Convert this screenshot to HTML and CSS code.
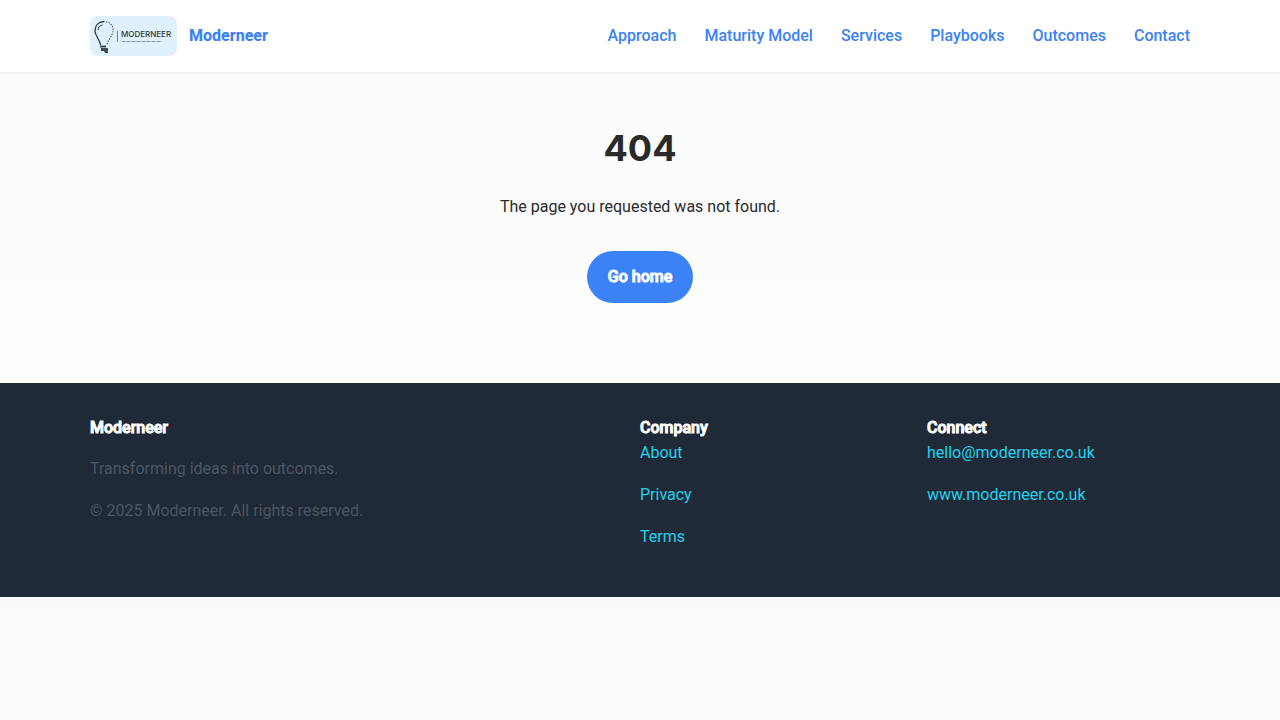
FILE: index.html
```html
<!DOCTYPE html>
<html lang="en">
<head>
<meta charset="utf-8">
<meta name="viewport" content="width=device-width, initial-scale=1">
<title>Page not found | Moderneer</title>
<link rel="stylesheet" href="styles.css">
</head>
<body>
<header class="site-header">
  <div class="container header-row">
    <a class="brand" href="#">
      <svg class="brand-logo" viewBox="0 0 87 40" aria-hidden="true">
        <rect width="87" height="40" fill="#def1fd"/>
        <g fill="none" stroke="#30363c">
          <path d="M14 5.500C8 6 4.800 10 5 15C5.200 20 9.500 23 10.500 29" stroke-width="1.300"/>
          <path d="M8 14C8 11.500 9.800 9.500 12.500 9" stroke-width="1"/>
          <path d="M14 5.500C20 5.500 23.500 10 23 15C22.500 20 17.500 24 17 29" stroke-width="1.200" stroke-linecap="round" stroke-dasharray="0.100 2.500"/>
          <path d="M27.500 15V26" stroke="#78838c" stroke-width="1"/>
          <path d="M32 25.500H72" stroke="#88939b" stroke-width="1" stroke-dasharray="3 0.500 1 0.500"/>
        </g>
        <path d="M10 29.500h6v2h-6zM11 32h7v3h-7zM14 35h4v2h-3z" fill="#454a4f"/>
        <text class="logo-word" x="31" y="21" fill="#30363c">MODERNEER</text>
      </svg>
      <span>Moderneer</span>
    </a>
    <nav class="main-nav" aria-label="Main">
      <a href="#">Approach</a>
      <a href="#">Maturity Model</a>
      <a href="#">Services</a>
      <a href="#">Playbooks</a>
      <a href="#">Outcomes</a>
      <a href="#">Contact</a>
    </nav>
  </div>
</header>
<main class="container not-found">
  <h1>404</h1>
  <p>The page you requested was not found.</p>
  <a class="button" href="#">Go home</a>
</main>
<footer class="site-footer">
  <div class="container footer-grid">
    <section>
      <h2>Moderneer</h2>
      <p>Transforming ideas into outcomes.</p>
      <p>© 2025 Moderneer. All rights reserved.</p>
    </section>
    <section>
      <h2>Company</h2>
      <ul>
        <li><a href="#">About</a></li>
        <li><a href="#">Privacy</a></li>
        <li><a href="#">Terms</a></li>
      </ul>
    </section>
    <section>
      <h2>Connect</h2>
      <ul>
        <li><a href="#">hello@moderneer.co.uk</a></li>
        <li><a href="#">www.moderneer.co.uk</a></li>
      </ul>
    </section>
  </div>
</footer>
</body>
</html>
```

FILE: styles.css
```css
* { box-sizing: border-box; }

body {
  margin: 0;
  background: linear-gradient(180deg, #f9fafb, #ffffff);
  color: #2a2a2a;
  font: 400 16px/26px Roboto, sans-serif;
}

a { text-decoration: none; }

.container {
  width: 100%;
  max-width: 1140px;
  margin: 0 auto;
  padding: 0 20px;
}

.site-header {
  background: #ffffff;
  border-bottom: 1px solid #f1f1f2;
  box-shadow: 0 1px 2px rgba(0, 0, 0, 0.03);
}

.header-row {
  display: flex;
  align-items: center;
  justify-content: space-between;
  padding-top: 16px;
  padding-bottom: 16px;
}

.brand {
  display: flex;
  align-items: center;
  gap: 12px;
  color: #3b82f6;
  font-weight: 800;
}

.brand-logo {
  width: 87px;
  height: 40px;
  border-radius: 8px;
}

.logo-word { font: 500 8px Inter, sans-serif; }

.main-nav {
  display: flex;
  flex-wrap: wrap;
  gap: 28px;
}

.main-nav a {
  color: #3b82f6;
  font-weight: 500;
}

.not-found {
  padding-top: 46px;
  padding-bottom: 80px;
  display: flex;
  flex-direction: column;
  align-items: center;
  text-align: center;
}

.not-found h1 {
  margin: 0 0 17px;
  font: 700 36px/58px Inter, sans-serif;
}

.not-found p { margin: 0 0 31px; }

.button {
  padding: 13px 21px;
  border-radius: 26px;
  background: #3b82f6;
  color: #ffffff;
  font-weight: 500;
  -webkit-text-stroke: 1px #ffffff;
}

.site-footer {
  padding: 32px 0 31px;
  background: #1f2937;
  color: #4b5563;
}

.footer-grid {
  display: grid;
  grid-template-columns: 2fr 1fr 1fr;
  gap: 24px;
}

.footer-grid h2 {
  margin: 0;
  color: #ffffff;
  font-size: 16px;
  line-height: 25px;
  font-weight: 500;
  -webkit-text-stroke: 1px #ffffff;
}

.footer-grid p { margin: 16px 0; }

.footer-grid ul {
  margin: 0;
  padding: 0;
  list-style: none;
}

.footer-grid li { margin-bottom: 16px; }

.footer-grid li a { color: #22d3ee; }
```
